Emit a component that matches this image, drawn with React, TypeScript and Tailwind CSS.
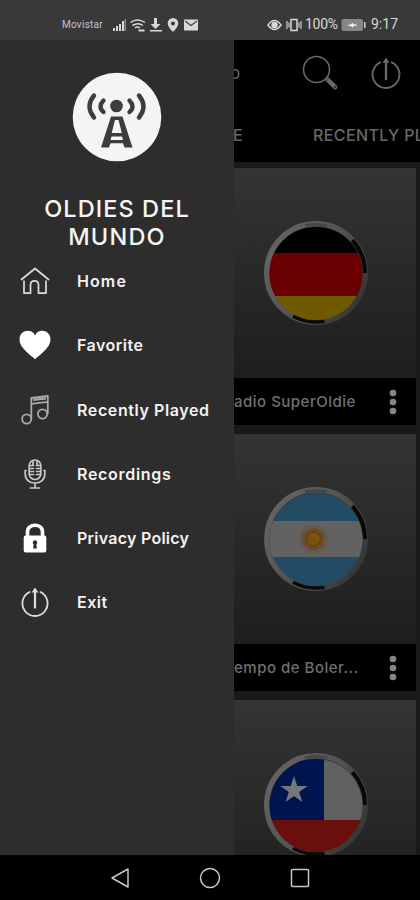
import type { ReactNode } from "react";

type MenuItem = {
  label: string;
  icon: ReactNode;
  tracking: string;
};

type Station = {
  name: string;
  flag: ReactNode;
};

function PowerIcon({ className }: { className: string }) {
  return (
    <svg viewBox="0 0 30 32" className={className} fill="none" stroke="currentColor">
      <path d="M9.2 5.3a13.5 13.5 0 1 0 11.6 0" strokeWidth="1.9" strokeLinecap="round" />
      <path d="M15 4v18" strokeWidth="2.4" strokeLinecap="round" />
      <path d="m15 .5 3.6 5.3h-7.2z" fill="currentColor" stroke="none" />
    </svg>
  );
}

function HomeIcon() {
  return (
    <svg viewBox="0 0 30 28" className="h-7 w-[30px]" fill="none" stroke="#dcdcdc" strokeWidth="1.7">
      <path d="M1.5 12.5 15 1.500l13.500 11" strokeLinecap="round" strokeLinejoin="round" />
      <path d="M4 13.500v12.700h6.500V18c0-5.400 8-5.400 8 0v8.200H26V13.500" strokeLinejoin="round" />
    </svg>
  );
}

function HeartIcon() {
  return (
    <svg viewBox="0 0 32 30" className="h-[30px] w-8" fill="#fff">
      <path d="M16 29.200C12 25 .5 18 .5 9.400.5.200 12.300-2.200 16 5.400c3.700-7.600 15.500-5.200 15.500 4C31.500 18 20 25 16 29.200z" />
    </svg>
  );
}

function MusicIcon() {
  return (
    <svg viewBox="0 0 28 30" className="h-[30px] w-7" fill="none" stroke="#aaa" strokeWidth="1.8">
      <circle cx="5.7" cy="24" r="4.6" />
      <circle cx="21.5" cy="19" r="4.6" />
      <path d="M10.300 24V3l16.500-2v18M10.300 8.800l16.500-2M12.200 5l12.700-1.500" strokeLinejoin="round" />
    </svg>
  );
}

function MicIcon() {
  return (
    <svg viewBox="0 0 22 30" className="h-[30px] w-[22px]" fill="none" stroke="#c8c8c8" strokeWidth="1.7" strokeLinecap="round">
      <rect x="5.2" y="1" width="11.6" height="19.5" rx="5.8" />
      <path d="M5.500 6.500h4M5.500 9.500h4M5.500 12.500h4M5.500 15.500h4M12.500 6.500h4M12.500 9.500h4M12.500 12.500h4M12.500 15.500h4M9 2.500v3M13 2.500v3" />
      <path d="M2 11.500H1.200V15c0 5.500 4 9 9.800 9s9.800-3.500 9.800-9v-3.500H20M11 24v4.500M6.500 29h9" />
    </svg>
  );
}

function LockIcon() {
  return (
    <svg viewBox="0 0 24 30" className="h-[30px] w-6" fill="none">
      <path d="M4.500 14V9c0-9 15-9 15 0v5" stroke="#fff" strokeWidth="3.6" />
      <rect x=".7" y="12.5" width="22.6" height="17" rx="2" fill="#fff" />
      <path d="M12 17.200a2.300 2.300 0 0 1 1.400 4.100l.5 4.200h-3.800l.5-4.200A2.300 2.300 0 0 1 12 17.200z" fill="#2d2d2d" />
    </svg>
  );
}

function TowerLogo() {
  return (
    <svg viewBox="0 0 90 90" className="h-[90px] w-[90px]">
      <circle cx="45" cy="45" r="44.3" fill="#f4f4f4" />
      <circle cx="44.5" cy="34" r="6.3" fill="#3d3d3d" />
      <g fill="none" stroke="#3d3d3d" strokeWidth="4.4" strokeLinecap="round">
        <path d="M22 23.500q-9 11 0 22M31.500 28.500q-6 6 0 11.500M67 23.500q9 11 0 22M57.500 28.500q6 6 0 11.500" />
      </g>
      <path
        fillRule="evenodd"
        fill="#3d3d3d"
        d="M39 44.500h11.500L60.500 75.500h-8l-1.500-4.200H38.500l-1.500 4.200h-8zM43 48l-3.300 13h10.100L46.500 48zM39.500 64.500l-1 3.500h12.500l-1-3.500z"
      />
    </svg>
  );
}

function FlagBadge({ id, children }: { id: string; children: ReactNode }) {
  return (
    <svg viewBox="0 0 106 106" className="h-[106px] w-[106px]">
      <defs>
        <clipPath id={`${id}-clip`}>
          <circle cx="53" cy="53.5" r="46.5" />
        </clipPath>
        <linearGradient id={`${id}-rim`} x1="0" y1=".2" x2="1" y2=".8">
          <stop offset="0" stopColor="#646464" />
          <stop offset=".5" stopColor="#525252" />
          <stop offset="1" stopColor="#343434" />
        </linearGradient>
      </defs>
      <circle cx="53" cy="53" r="49.2" fill="none" stroke={`url(#${id}-rim)`} strokeWidth="5.5" />
      <path d="M89.400 20.200A49 49 0 0 1 102 53" fill="none" stroke="#080808" strokeWidth="4" />
      <path d="M30 96.300A49 49 0 0 0 61.500 101.300" fill="none" stroke="#0a0a0a" strokeWidth="3.5" />
      <path d="M42 5.500q10-2 22 0" fill="none" stroke="#45454b" strokeWidth="2.5" />
      <g clipPath={`url(#${id}-clip)`}>{children}</g>
    </svg>
  );
}

const menuItems: MenuItem[] = [
  { label: "Home", icon: <HomeIcon />, tracking: "tracking-[1.1px]" },
  { label: "Favorite", icon: <HeartIcon />, tracking: "tracking-[0.5px]" },
  { label: "Recently Played", icon: <MusicIcon />, tracking: "tracking-[0.6px]" },
  { label: "Recordings", icon: <MicIcon />, tracking: "tracking-[0.7px]" },
  { label: "Privacy Policy", icon: <LockIcon />, tracking: "tracking-[0.25px]" },
  { label: "Exit", icon: <PowerIcon className="h-[30px] w-7 text-[#dedede]" />, tracking: "tracking-[0.5px]" },
];

const stations: Station[] = [
  {
    name: "adio SuperOldie",
    flag: (
      <FlagBadge id="de">
        <path fill="#000" d="M0 0h106v33H0z" />
        <path fill="#6b0000" d="M0 33h106v43H0z" />
        <path fill="#705a00" d="M0 76h106v30H0z" />
      </FlagBadge>
    ),
  },
  {
    name: "empo de Boler...",
    flag: (
      <FlagBadge id="ar">
        <path fill="#234c64" d="M0 0h106v106H0z" />
        <path fill="#626262" d="M0 35h106v36H0z" />
        <circle cx="50.5" cy="53" r="14.5" fill="#665a50" />
        <circle cx="50.5" cy="53" r="11" fill="#6b4b27" />
        <circle cx="50.5" cy="53" r="7" fill="#79530b" stroke="#5b3a04" />
      </FlagBadge>
    ),
  },
  {
    name: "",
    flag: (
      <FlagBadge id="cl">
        <path fill="#00154f" d="M0 0h61v68H0z" />
        <path fill="#616161" d="M61 0h45v68H61z" />
        <path fill="#69100c" d="M0 68h106v38H0z" />
        <path fill="#777" d="m31 24 3.200 9.900h10.400l-8.400 6.200 3.200 9.900-8.400-6.100-8.400 6.100 3.200-9.900-8.400-6.200h10.400z" />
      </FlagBadge>
    ),
  },
];

function StatusBar() {
  return (
    <header className="flex h-10 shrink-0 items-center bg-[#393939] pt-[9px] text-[#d8d8d8]">
      <span className="ml-[62px] w-[51px] font-['Roboto'] text-[10px] tracking-[0.25px] text-[#c4c4c4]">Movistar</span>
      <svg viewBox="0 0 86 16" className="h-4 w-[86px]" fill="#d8d8d8">
        <path d="M0 11h2v3H0zM3 9h2v5H3zM6 7h2v7H6zM9 4h2v10H9z" />
        <path d="M11.500 2H13v12h-1.500z" fill="#888" />
        <g fill="none" stroke="#d8d8d8" strokeWidth="1.5">
          <path d="M17.500 5.500q7-5 14.500 0M19.500 8.500q5.500-3.500 10.500 0M22 11q2.500-2 5 0" />
          <path d="M25.500 13.500h6" strokeWidth="2" />
        </g>
        <path d="M41 1h3v6h3.500L42.500 12 37.500 7H41zM37 13h12v1.500H37z" />
        <path fillRule="evenodd" d="M60 1a5.300 5.300 0 0 1 5.300 5.300C65.300 10 60 15 60 15s-5.300-5-5.300-8.700A5.300 5.300 0 0 1 60 1zm0 3.500a2 2 0 1 0 0 4 2 2 0 0 0 0-4z" />
        <path d="M71 2.500h14v11H71z" />
        <path d="m72 4 6 4.500L84 4" fill="none" stroke="#444" strokeWidth="1.3" />
      </svg>
      <div className="ml-auto flex items-center pr-[22px] font-['Roboto'] text-[14px]">
        <svg viewBox="0 0 36 16" className="mr-[3px] h-4 w-9" fill="none" stroke="#d8d8d8" strokeWidth="1.5">
          <path d="M2 8q6.500-9 13 0-6.500 9-13 0z" />
          <circle cx="8.5" cy="8" r="2.5" fill="#d8d8d8" />
          <path d="M21 4v8M23 5.500v5M35 4v8M33 5.500v5" strokeWidth="1.1" />
          <rect x="25" y="2.5" width="6" height="11" />
        </svg>
        <span className="w-[33px] whitespace-nowrap tracking-[-0.3px]">100%</span>
        <svg viewBox="0 0 26 14" className="ml-[3px] mr-1 h-[14px] w-[26px]">
          <rect x=".5" y="1" width="21.5" height="12" rx="2" fill="#868686" />
          <path d="M23 4h1.500v6H23z" fill="#d0d0d0" />
          <path d="m7 7.300 3.500-.6.8-1.700 1 1.700 3.500.4-3.500.6-.8 1.600-1-1.600z" fill="#fff" stroke="#fff" strokeWidth=".6" />
        </svg>
        <span className="w-[27px] whitespace-nowrap">9:17</span>
      </div>
    </header>
  );
}

function Drawer() {
  return (
    <aside className="w-[234px] shrink-0 bg-[#2d2d2d] text-white">
      <div className="flex flex-col items-center pt-8">
        <TowerLogo />
        <h1 className="mt-[33px] text-center text-[23.5px] font-medium leading-7 text-[#f5f5f5]">
          <span className="block tracking-[1.1px]">OLDIES DEL</span>
          <span className="block tracking-[1.2px]">MUNDO</span>
        </h1>
      </div>
      <nav className="-mt-[2px]">
        {menuItems.map((item) => (
          <div key={item.label} className="flex h-[64.25px] items-center">
            <div className="ml-[19px] flex w-8 justify-center">{item.icon}</div>
            <span className={`ml-[26px] whitespace-nowrap text-[16px] font-semibold text-[#f2f2f2] ${item.tracking}`}>
              {item.label}
            </span>
          </div>
        ))}
      </nav>
    </aside>
  );
}

function StationCard({ station }: { station: Station }) {
  return (
    <article className="mb-[9px] w-[182px] shrink-0">
      <div className="flex h-[210px] items-center justify-end bg-linear-to-b from-[#343432] to-[#1e1e1d] pr-[47px]">
        {station.flag}
      </div>
      <div className="flex h-[47px] items-center justify-between bg-black text-[#707070]">
        <span className="whitespace-nowrap pt-[2px] text-[15px] font-medium tracking-[0.5px]">{station.name}</span>
        <svg viewBox="0 0 8 26" className="mr-[19px] h-[26px] w-2" fill="#858585">
          <circle cx="4" cy="4" r="3.3" />
          <circle cx="4" cy="13" r="3.3" />
          <circle cx="4" cy="22" r="3.3" />
        </svg>
      </div>
    </article>
  );
}

function StationList() {
  return (
    <main className="flex min-w-0 flex-1 flex-col overflow-hidden bg-[#191919]">
      <div className="h-[122px] shrink-0 bg-black text-[#686868]">
        <div className="flex h-[65px] items-center">
          <span className="-ml-[4px] w-[72px] pt-[2px] text-[17px]">o</span>
          <svg viewBox="0 0 36 36" className="h-9 w-9" fill="none" stroke="#686868" strokeWidth="1.6">
            <circle cx="14.5" cy="14.5" r="13" />
            <path d="m24 25 2-2 8.500 8.500q.5 2.500-2 2zM26 25l6.500 6.500" />
          </svg>
          <PowerIcon className="ml-[33px] h-8 w-[30px]" />
        </div>
        <div className="flex h-[57px] items-center whitespace-nowrap pt-[2px] text-[16px] font-medium">
          <span className="-ml-[1px] w-[80px] shrink-0">E</span>
          <span className="tracking-[0.4px]">RECENTLY PLAYED</span>
        </div>
      </div>
      <div className="flex flex-col pt-[6px]">
        {stations.map((station, index) => (
          <StationCard key={index} station={station} />
        ))}
      </div>
    </main>
  );
}

function NavigationBar() {
  return (
    <footer className="flex h-[45px] shrink-0 items-center justify-center gap-[69px] bg-black">
      <svg viewBox="0 0 20 22" className="h-[22px] w-5" fill="none" stroke="#c7c7c7" strokeWidth="1.5">
        <path d="M18 2v18L2 11z" strokeLinejoin="round" />
      </svg>
      <svg viewBox="0 0 22 22" className="h-[22px] w-[22px]" fill="none" stroke="#c7c7c7" strokeWidth="1.5">
        <circle cx="11" cy="11" r="9.5" />
      </svg>
      <svg viewBox="0 0 20 20" className="h-5 w-5" fill="none" stroke="#c7c7c7" strokeWidth="1.5">
        <rect x="1.5" y="1.5" width="17" height="17" rx="1" />
      </svg>
    </footer>
  );
}

export default function App() {
  return (
    <div className="flex h-[900px] w-[420px] flex-col overflow-hidden bg-black font-['Inter',sans-serif]">
      <StatusBar />
      <div className="flex min-h-0 flex-1 overflow-hidden">
        <Drawer />
        <StationList />
      </div>
      <NavigationBar />
    </div>
  );
}
